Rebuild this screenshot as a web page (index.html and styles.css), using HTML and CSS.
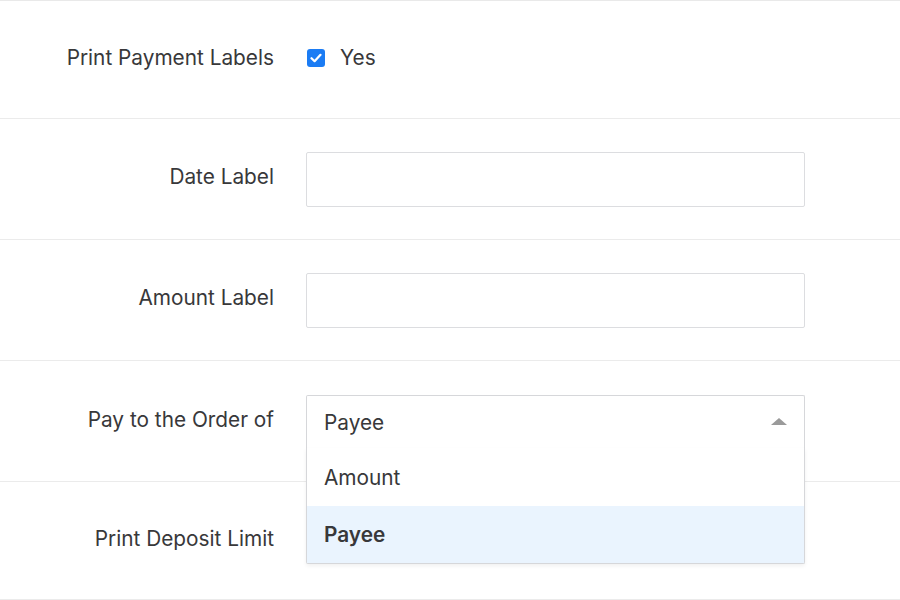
FILE: index.html
```html
<!DOCTYPE html>
<html>
<head>
<meta charset="utf-8">
<link rel="stylesheet" href="styles.css">
</head>
<body>
<div class="form">
  <div class="row row-short">
    <div class="label">Print Payment Labels</div>
    <label class="check">
      <span class="box"><svg width="12" height="10" viewBox="0 0 12 10"><path d="M1.5 5.2 L4.6 8.2 L10.5 1.8" fill="none" stroke="#fff" stroke-width="2.2" stroke-linecap="round" stroke-linejoin="round"/></svg></span>
      <span>Yes</span>
    </label>
  </div>
  <div class="row">
    <div class="label">Date Label</div>
    <div class="input"></div>
  </div>
  <div class="row">
    <div class="label">Amount Label</div>
    <div class="input"></div>
  </div>
  <div class="row">
    <div class="label">Pay to the Order of</div>
    <div class="select">
      <div class="select-head">
        <span>Payee</span>
        <span class="arrow"></span>
      </div>
      <div class="menu">
        <div class="option">Amount</div>
        <div class="option selected">Payee</div>
      </div>
    </div>
  </div>
  <div class="row row-short">
    <div class="label">Print Deposit Limit</div>
    <div></div>
  </div>
</div>
</body>
</html>
```
FILE: styles.css
```css
html, body {
  margin: 0;
  padding: 0;
  background: #fff;
}
body {
  font-family: Inter, "Open Sans", sans-serif;
  font-size: 20.8px;
  color: #38383a;
}
.form {
  border-top: 1px solid #e9e9e9;
}
.row {
  display: grid;
  grid-template-columns: 274px 499px;
  column-gap: 32px;
  align-items: center;
  box-sizing: border-box;
  height: 121px;
  padding: 32px 0;
  border-bottom: 1px solid #ebebeb;
}
.row-short {
  height: 118px;
  padding: 0;
}
.label {
  text-align: right;
  margin-top: -5px;
}
.check {
  display: flex;
  align-items: center;
  gap: 15px;
  margin-left: 1px;
  margin-top: -4px;
}
.box {
  width: 18px;
  height: 18px;
  border-radius: 3px;
  background: #1b7cf4;
  display: flex;
  align-items: center;
  justify-content: center;
}
.input {
  height: 55px;
  box-sizing: border-box;
  border: 1px solid #dcdde0;
  border-radius: 2px;
  background: #fff;
}
.select {
  position: relative;
  height: 55px;
  margin-top: 2px;
}
.select-head {
  box-sizing: border-box;
  height: 54px;
  border: 1px solid #d6d7da;
  border-bottom: 1px solid #ededee;
  border-radius: 2px 2px 0 0;
  display: flex;
  align-items: center;
  justify-content: space-between;
  padding: 0 17px 0 17px;
  background: #fff;
}
.arrow {
  width: 0;
  height: 0;
  border-left: 8px solid transparent;
  border-right: 8px solid transparent;
  border-bottom: 7px solid #9a9a9a;
  margin-top: -2px;
}
.menu {
  position: absolute;
  top: 53px;
  left: 0;
  right: 0;
  background: #fff;
  border: 1px solid #d6d7da;
  border-top: none;
  border-radius: 0 0 2px 2px;
  box-shadow: 0 2px 4px rgba(0, 0, 0, 0.06);
  z-index: 2;
}
.option {
  height: 58px;
  display: flex;
  align-items: center;
  padding: 0 17px;
}
.option.selected {
  background: #eaf4fe;
  font-weight: 600;
  height: 57px;
}
```
